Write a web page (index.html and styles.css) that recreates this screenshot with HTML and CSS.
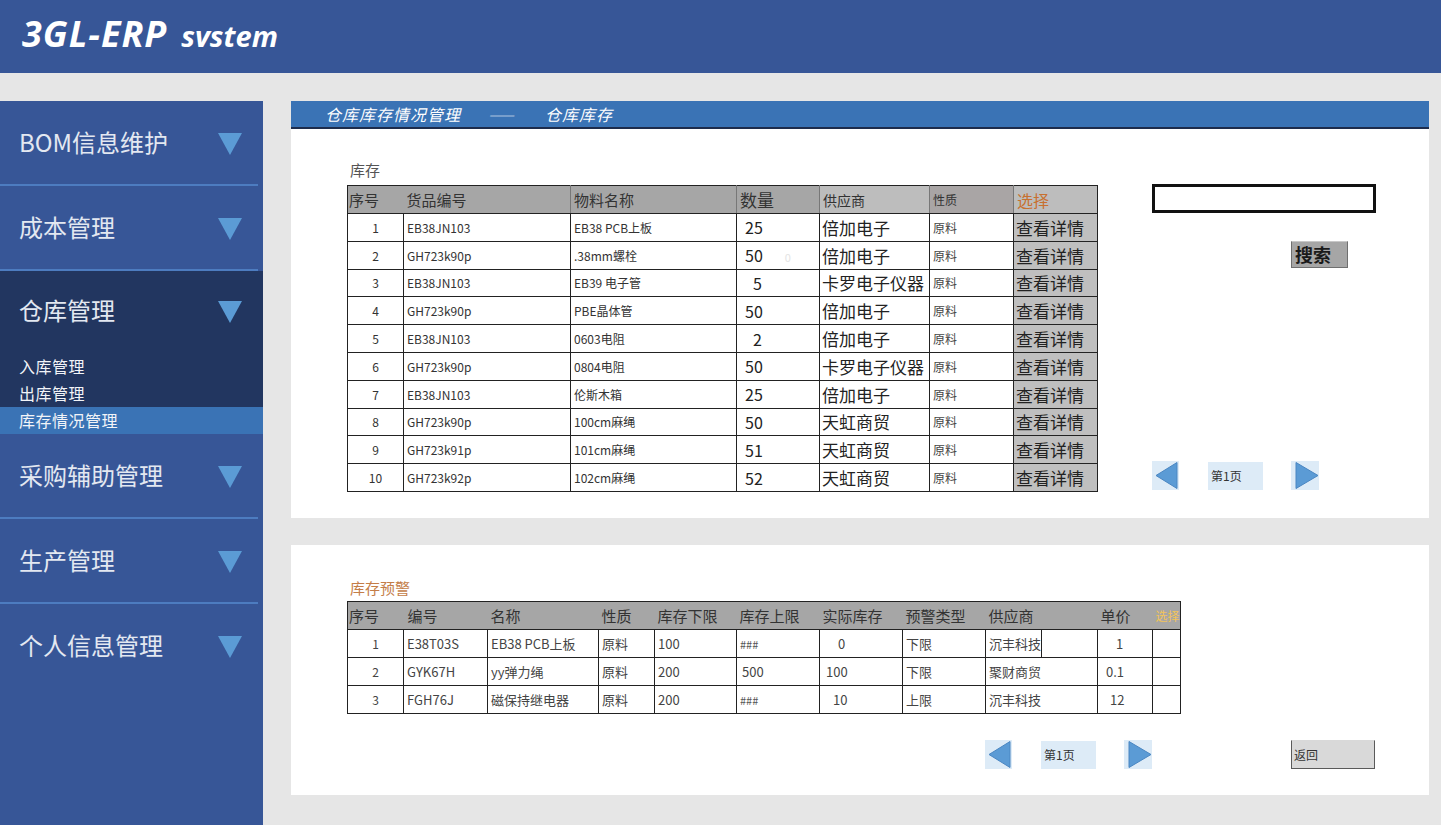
FILE: index.html
```html
<!DOCTYPE html>
<html lang="zh-CN">
<head>
<meta charset="utf-8">
<title>3GL-ERP system</title>
<link rel="stylesheet" href="styles.css">
</head>
<body>
<header class="topbar">
  <span class="logo-main">3GL-ERP</span><span class="logo-sub">svstem</span>
</header>
<div class="layout">
  <nav class="sidebar">
    <div class="nav-item"><span>BOM信息维护</span><i class="tri"></i></div>
    <div class="nav-item"><span>成本管理</span><i class="tri"></i></div>
    <div class="nav-group">
      <div class="nav-head"><span>仓库管理</span><i class="tri"></i></div>
      <div class="nav-sub">入库管理</div>
      <div class="nav-sub">出库管理</div>
      <div class="nav-sub active">库存情况管理</div>
    </div>
    <div class="nav-item"><span>采购辅助管理</span><i class="tri"></i></div>
    <div class="nav-item"><span>生产管理</span><i class="tri"></i></div>
    <div class="nav-item last"><span>个人信息管理</span><i class="tri"></i></div>
  </nav>
  <main class="content">
    <section class="panel panel-stock">
      <div class="crumb"><span>仓库库存情况管理</span><span class="dash">——</span><span>仓库库存</span></div>
      <div class="stock-body">
        <div class="stock-left">
          <div class="label">库存</div>
          <table class="grid grid-stock">
            <colgroup><col style="width:56px"><col style="width:167px"><col style="width:166px"><col style="width:83px"><col style="width:110px"><col style="width:84px"><col style="width:84px"></colgroup>
            <thead>
              <tr><th class="h-no">序号</th><th>货品编号</th><th class="h-div">物料名称</th><th class="h-qty h-div">数量</th><th class="h-sup h-div">供应商</th><th class="h-kind h-div">性质</th><th class="h-sel h-div">选择</th></tr>
            </thead>
            <tbody>
              <tr><td class="c-no">1</td><td class="c-code">EB38JN103</td><td class="c-name">EB38 PCB上板</td><td class="c-qty">25</td><td class="c-sup">倍加电子</td><td class="c-kind">原料</td><td class="c-sel">查看详情</td></tr>
              <tr><td class="c-no">2</td><td class="c-code">GH723k90p</td><td class="c-name">.38mm螺栓</td><td class="c-qty">50<span class="ghost">0</span></td><td class="c-sup">倍加电子</td><td class="c-kind">原料</td><td class="c-sel">查看详情</td></tr>
              <tr><td class="c-no">3</td><td class="c-code">EB38JN103</td><td class="c-name">EB39 电子管</td><td class="c-qty one">5</td><td class="c-sup">卡罗电子仪器</td><td class="c-kind">原料</td><td class="c-sel">查看详情</td></tr>
              <tr><td class="c-no">4</td><td class="c-code">GH723k90p</td><td class="c-name">PBE晶体管</td><td class="c-qty">50</td><td class="c-sup">倍加电子</td><td class="c-kind">原料</td><td class="c-sel">查看详情</td></tr>
              <tr><td class="c-no">5</td><td class="c-code">EB38JN103</td><td class="c-name">0603电阻</td><td class="c-qty one">2</td><td class="c-sup">倍加电子</td><td class="c-kind">原料</td><td class="c-sel">查看详情</td></tr>
              <tr><td class="c-no">6</td><td class="c-code">GH723k90p</td><td class="c-name">0804电阻</td><td class="c-qty">50</td><td class="c-sup">卡罗电子仪器</td><td class="c-kind">原料</td><td class="c-sel">查看详情</td></tr>
              <tr><td class="c-no">7</td><td class="c-code">EB38JN103</td><td class="c-name">伦斯木箱</td><td class="c-qty">25</td><td class="c-sup">倍加电子</td><td class="c-kind">原料</td><td class="c-sel">查看详情</td></tr>
              <tr><td class="c-no">8</td><td class="c-code">GH723k90p</td><td class="c-name">100cm麻绳</td><td class="c-qty">50</td><td class="c-sup">天虹商贸</td><td class="c-kind">原料</td><td class="c-sel">查看详情</td></tr>
              <tr><td class="c-no">9</td><td class="c-code">GH723k91p</td><td class="c-name">101cm麻绳</td><td class="c-qty">51</td><td class="c-sup">天虹商贸</td><td class="c-kind">原料</td><td class="c-sel">查看详情</td></tr>
              <tr><td class="c-no">10</td><td class="c-code">GH723k92p</td><td class="c-name">102cm麻绳</td><td class="c-qty">52</td><td class="c-sup">天虹商贸</td><td class="c-kind">原料</td><td class="c-sel">查看详情</td></tr>
            </tbody>
          </table>
        </div>
        <div class="stock-right">
          <div class="search-box"></div>
          <div class="search-btn">搜索</div>
          <div class="pager pager-top">
            <div class="pg-arrow"><svg width="27" height="29" viewBox="0 0 27 29"><polygon points="4,14.5 25,1.5 25,27.5" fill="#5b9bd5" stroke="#4a86c2" stroke-width="1"/></svg></div>
            <div class="pg-num">第1页</div>
            <div class="pg-arrow"><svg width="28" height="29" viewBox="0 0 28 29"><polygon points="5,1.5 27,14.5 5,27.5" fill="#5b9bd5" stroke="#4a86c2" stroke-width="1"/></svg></div>
          </div>
        </div>
      </div>
    </section>
    <section class="panel panel-warn">
      <div class="label warn">库存预警</div>
      <table class="grid grid-warn">
        <colgroup><col style="width:56px"><col style="width:84px"><col style="width:111px"><col style="width:56px"><col style="width:82px"><col style="width:83px"><col style="width:83px"><col style="width:83px"><col style="width:112px"><col style="width:55px"><col style="width:28px"></colgroup>
        <thead>
          <tr><th class="h-no">序号</th><th class="h-code">编号</th><th>名称</th><th>性质</th><th>库存下限</th><th>库存上限</th><th>实际库存</th><th>预警类型</th><th>供应商</th><th>单价</th><th class="h-pick">选择</th></tr>
        </thead>
        <tbody>
          <tr><td class="c-no">1</td><td>E38T03S</td><td>EB38 PCB上板</td><td>原料</td><td>100</td><td class="hash">###</td><td class="i18">0</td><td>下限</td><td><span class="split">沉丰科技</span></td><td class="i18">1</td><td></td></tr>
          <tr><td class="c-no">2</td><td>GYK67H</td><td>yy弹力绳</td><td>原料</td><td>200</td><td class="i5">500</td><td class="i6">100</td><td>下限</td><td>聚财商贸</td><td class="i8">0.1</td><td></td></tr>
          <tr><td class="c-no">3</td><td>FGH76J</td><td>磁保持继电器</td><td>原料</td><td>200</td><td class="hash">###</td><td class="i13">10</td><td>上限</td><td>沉丰科技</td><td class="i12">12</td><td></td></tr>
        </tbody>
      </table>
      <div class="warn-foot">
        <div class="pager">
          <div class="pg-arrow"><svg width="27" height="29" viewBox="0 0 27 29"><polygon points="4,14.5 25,1.5 25,27.5" fill="#5b9bd5" stroke="#4a86c2" stroke-width="1"/></svg></div>
          <div class="pg-num">第1页</div>
          <div class="pg-arrow"><svg width="28" height="29" viewBox="0 0 28 29"><polygon points="5,1.5 27,14.5 5,27.5" fill="#5b9bd5" stroke="#4a86c2" stroke-width="1"/></svg></div>
        </div>
        <div class="back-btn">返回</div>
      </div>
    </section>
  </main>
</div>
</body>
</html>
```
FILE: styles.css
```css
* { box-sizing: border-box; }
html, body { margin: 0; padding: 0; }
body {
  background: #e6e6e6;
  font-family: "Noto Sans CJK SC", "Noto Sans", sans-serif;
  color: #222;
  width: 1441px;
  height: 825px;
  overflow: hidden;
}
.topbar {
  height: 73px;
  background: #375697;
  color: #fff;
  padding: 12px 0 0 22px;
  font-family: "Open Sans", "Noto Sans", sans-serif;
  font-weight: 700;
  font-style: italic;
  white-space: nowrap;
}
.logo-main { font-size: 36px; letter-spacing: 1px; line-height: 44px; }
.logo-sub { font-size: 29px; margin-left: 14px; line-height: 44px; }

.layout {
  display: flex;
  gap: 28px;
  padding-top: 28px;
}
.sidebar {
  width: 263px;
  height: 724px;
  background: #375697;
  flex: none;
  color: #e3e8f1;
}
.nav-item, .nav-head {
  height: 85px;
  display: flex;
  align-items: center;
  justify-content: space-between;
  padding: 0 21px 4px 19px;
  font-size: 24px;
  position: relative;
}
.nav-item::after {
  content: "";
  position: absolute;
  left: 0;
  right: 5px;
  bottom: 0;
  height: 2px;
  background: #4d7cc0;
}
.nav-item.last::after { display: none; }
.tri {
  width: 0;
  height: 0;
  border-left: 12px solid transparent;
  border-right: 12px solid transparent;
  border-top: 22px solid #5b9bd5;
  margin-top: 5px;
}
.nav-group { background: #223660; }
.nav-head { height: 82px; padding-bottom: 5px; }
.nav-sub {
  height: 27px;
  line-height: 27px;
  padding-left: 19px;
  font-size: 16px;
  letter-spacing: 0.5px;
  color: #f2f4f8;
}
.nav-sub.active { background: #3a73b5; }

.content {
  width: 1138px;
  display: flex;
  flex-direction: column;
  gap: 27px;
}
.panel { background: #fff; }
.panel-stock { height: 417px; }
.panel-warn { height: 250px; padding: 32px 0 0 56px; }

.crumb {
  height: 28px;
  background: #3a73b5;
  border-bottom: 2px solid #1d2c4c;
  color: #fff;
  font-style: italic;
  font-size: 16px;
  letter-spacing: 1px;
  line-height: 26px;
  padding-left: 34px;
  white-space: nowrap;
}
.crumb .dash { margin: 0 31px 0 27px; letter-spacing: 0; font-size: 13px; }

.stock-body {
  display: flex;
  padding: 30px 0 0 56px;
}
.label {
  height: 22px;
  line-height: 22px;
  font-size: 15px;
  color: #555;
  padding-left: 3px;
}
.label.warn { color: #c47d48; }
.grid-stock { margin-top: 4px; }
.grid-warn { margin-top: 2px; }

.grid {
  border-collapse: collapse;
  table-layout: fixed;
  border: 1px solid #222;
}
.grid-stock { width: 750px; }
.grid-warn { width: 833px; }
.grid th {
  background: #a6a6a6;
  font-weight: 400;
  text-align: left;
  padding: 0 0 0 3px;
  font-size: 15px;
  color: #333;
  height: 28px;
  white-space: nowrap;
  overflow: hidden;
  border-bottom: 1px solid #222;
}
.grid th.h-no { padding-left: 1px; }
.grid-stock th.h-div { border-left: 1px solid #777; }
.grid-stock th.h-qty { font-size: 17px; }
.grid-stock th.h-sup { background: #bdbdbd; font-size: 14px; }
.grid-stock th.h-kind { background: #a9a5a5; font-size: 12px; }
.grid-stock th.h-sel { background: #bdbdbd; color: #c8702f; font-size: 16px; }
.grid-warn th.h-code { padding-left: 4px; }
.grid-warn th.h-pick { color: #f2c45a; font-size: 12px; }

.grid td {
  border: 1px solid #222;
  padding: 0 0 0 3px;
  white-space: nowrap;
  overflow: hidden;
  font-size: 12px;
  color: #333;
}
.grid-stock tbody tr { height: 27.8px; }
.grid-warn tbody tr { height: 28px; }
.grid td.c-no { text-align: center; padding-left: 0; font-size: 12px; }
.grid-stock td.c-code, .grid-stock td.c-name { font-size: 12px; }
.grid-stock td.c-qty { font-size: 16px; padding-left: 8px; color: #222; }
.grid-stock td.c-qty.one { padding-left: 16px; }
.ghost { color: #e4e4e4; font-size: 11px; margin-left: 22px; }
.grid-stock td.c-sup { font-size: 17px; color: #222; padding-left: 2px; }
.grid-stock td.c-kind { font-size: 12px; color: #444; }
.grid-stock td.c-sel { background: #bfbfbf; font-size: 17px; color: #222; padding-left: 2px; }

.grid-warn td { font-size: 13px; color: #444; }
.grid-warn td.hash { font-size: 11px; color: #555; }
.grid-warn td.i5 { padding-left: 5px; }
.grid-warn td.i6 { padding-left: 6px; }
.grid-warn td.i8 { padding-left: 8px; }
.grid-warn td.i12 { padding-left: 12px; }
.grid-warn td.i13 { padding-left: 13px; }
.grid-warn td.i18 { padding-left: 18px; }
.split {
  display: inline-block;
  width: 53px;
  border-right: 1px solid #222;
  line-height: 27px;
}

.stock-right {
  margin-left: 54px;
  display: flex;
  flex-direction: column;
}
.search-box {
  margin-top: 25px;
  width: 224px;
  height: 29px;
  border: 3px solid #111;
  background: #fff;
}
.search-btn {
  margin: 28px 0 0 139px;
  width: 57px;
  height: 27px;
  background: #a6a6a6;
  border: 1px solid #6f6f6f;
  border-top-color: #c8c8c8;
  font-size: 18px;
  font-weight: 700;
  line-height: 25px;
  padding-left: 3px;
  color: #1a1a1a;
}
.pager {
  display: flex;
  align-items: center;
}
.pager-top { margin-top: 193px; }
.pg-arrow {
  width: 27px;
  height: 29px;
  background: #ddebf7;
  display: flex;
}
.pg-arrow + .pg-num { margin-left: 29px; }
.pg-num + .pg-arrow { margin-left: 28px; width: 28px; }
.pg-num {
  width: 55px;
  height: 28px;
  background: #ddebf7;
  font-size: 12px;
  line-height: 28px;
  padding-left: 3px;
  color: #333;
}
.warn-foot {
  display: flex;
  align-items: flex-start;
  margin-top: 26px;
  padding-left: 638px;
}
.back-btn {
  margin-left: 139px;
  width: 84px;
  height: 29px;
  background: #d9d9d9;
  border: 1px solid #5a5a5a;
  border-top-color: #d9d9d9;
  font-size: 12px;
  line-height: 27px;
  padding-left: 2px;
  color: #333;
}
```
